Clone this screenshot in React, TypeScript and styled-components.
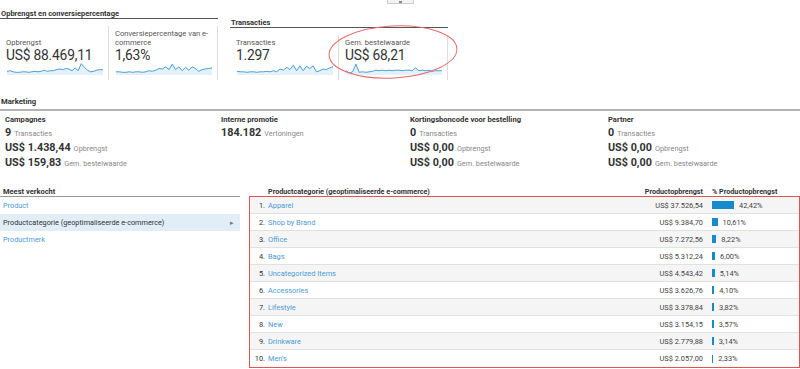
import React from 'react';
import styled, { createGlobalStyle } from 'styled-components';

const GlobalStyle = createGlobalStyle`
    html, body {
        margin: 0;
        padding: 0;
        background: #fff;
    }
    body {
        font-family: Roboto, "Liberation Sans", sans-serif;
        color: #333;
    }
`;

const Page = styled.div`
    position: relative;
    width: 800px;
    height: 369px;
    overflow: hidden;
`;

const TopToggle = styled.div`
    width: 27px;
    height: 4px;
    margin: 0 auto;
    box-sizing: border-box;
    border: 1px solid #ccc;
    border-top: none;
    background: #f3f3f3;
    display: flex;
    justify-content: center;
    align-items: flex-end;
    &::after {
        content: '';
        width: 3px;
        height: 2px;
        background: #888;
    }
`;

const TopSection = styled.div`
    display: flex;
    align-items: flex-end;
    gap: 12px;
    margin-top: 5px;
`;

const Group = styled.div`
    width: 218px;
    display: flex;
    flex-direction: column;
`;

const GroupTitle = styled.div`
    font-size: 7.5px;
    font-weight: 700;
    line-height: 9px;
    padding-left: 1px;
    border-bottom: 1px solid #555;
    margin-bottom: 6.5px;
`;

const Cards = styled.div`
    display: flex;
`;

const Card = styled.div`
    width: 109px;
    box-sizing: border-box;
    border-right: 1px solid #ddd;
    padding: 3px 0 5px 6px;
    display: flex;
    flex-direction: column;
    justify-content: flex-end;
`;

const CardLabel = styled.div`
    font-size: 7.6px;
    line-height: 9px;
    color: #555;
    margin-bottom: 1.5px;
    padding-right: 3px;
`;

const CardValue = styled.div`
    font-size: 13.8px;
    line-height: 14px;
    letter-spacing: -0.2px;
    color: #333;
`;

const SparkSvg = styled.svg`
    display: block;
    margin-left: 1px;
`;

const Section = styled.div`
    margin-top: 17px;
`;

const SectionTitle = styled.div`
    font-size: 7.7px;
    font-weight: 700;
    line-height: 10px;
    padding: 0 0 2px 1px;
    border-bottom: 2px solid #b3b3b3;
`;

const MarketingGrid = styled.div`
    display: grid;
    grid-template-columns: 216px 189px 198px 1fr;
    padding: 3.5px 0 0 5px;
`;

const MarketingTitle = styled.div`
    font-size: 7.6px;
    font-weight: 700;
    line-height: 10px;
`;

const StatLine = styled.div`
    display: flex;
    align-items: baseline;
    height: 15px;
    line-height: 15px;
    white-space: nowrap;
`;

const StatValue = styled.span`
    font-size: 10.8px;
    font-weight: 700;
    color: #333;
`;

const StatLabel = styled.span`
    font-size: 7.3px;
    color: #888;
    margin-left: 3px;
`;

const Bottom = styled.div`
    display: flex;
    gap: 9px;
    margin-top: 16.5px;
`;

const SideList = styled.div`
    width: 240px;
`;

const SideTitle = styled.div`
    box-sizing: border-box;
    height: 11px;
    padding: 2px 0 0 3px;
    font-size: 7.5px;
    font-weight: 700;
    line-height: 8px;
    border-bottom: 1px solid #999;
`;

const SideItem = styled.div<{ $active?: boolean }>`
    height: 17px;
    display: flex;
    align-items: center;
    justify-content: space-between;
    padding: 0 6px 0 3px;
    font-size: 7.3px;
    color: ${(p) => (p.$active ? '#333' : '#4b9bd5')};
    background: ${(p) => (p.$active ? '#e2eef7' : 'transparent')};
`;

const Arrow = styled.span`
    font-size: 7px;
    color: #777;
`;

const TableWrap = styled.div`
    flex: 1;
`;

const HeadRow = styled.div`
    display: grid;
    grid-template-columns: 15px 1fr 100px 96px;
    box-sizing: border-box;
    height: 10px;
    padding: 2px 1px 0;
    font-size: 7.2px;
    font-weight: 700;
    line-height: 8px;
`;

const Box = styled.div`
    border: 1px solid #e25454;
`;

const Row = styled.div<{ $odd: boolean }>`
    display: grid;
    grid-template-columns: 15px 1fr 100px 96px;
    align-items: center;
    height: 17px;
    box-sizing: border-box;
    border-bottom: 1px solid #e1e1e1;
    background: ${(p) => (p.$odd ? '#f5f5f5' : '#fff')};
    font-size: 7.4px;
    &:last-child {
        border-bottom: none;
    }
`;

const Num = styled.div`
    text-align: right;
    color: #333;
`;

const Name = styled.div`
    padding-left: 3px;
    color: #4b9bd5;
`;

const NameHead = styled.div`
    padding-left: 3px;
`;

const Value = styled.div`
    text-align: right;
    color: #444;
`;

const ValueHead = styled.div`
    text-align: right;
`;

const PctCell = styled.div`
    padding-left: 9px;
    display: flex;
    align-items: center;
    color: #444;
`;

const PctHead = styled.div`
    padding-left: 9px;
`;

const Bar = styled.div`
    height: 8px;
    background: #158bcb;
    margin-right: 5px;
`;

const Ellipse = styled.svg`
    position: absolute;
    left: 327px;
    top: 22px;
    overflow: visible;
`;

const Spark = ({ data }: { data: number[] }) => {
    const w = 96;
    const h = 13;
    const step = w / (data.length - 1);
    const pts = data.map((v, i) => `${(i * step).toFixed(1)},${(h - 1 - v * (h - 2)).toFixed(1)}`);
    const line = pts.join(' ');
    const area = `0,${h} ${line} ${w},${h}`;
    return (
        <SparkSvg width={w} height={h} viewBox={`0 0 ${w} ${h}`}>
            <polygon points={area} fill="#e4f1fa" />
            <polyline points={line} fill="none" stroke="#4a9fd8" strokeWidth="1" />
        </SparkSvg>
    );
};

const revenue = [0.25, 0.3, 0.2, 0.15, 0.15, 0.2, 0.2, 0.15, 0.2, 0.25, 0.2, 0.25, 0.35, 0.25, 0.3, 0.3, 0.4, 0.45, 0.4, 0.5, 0.45, 0.3, 0.55, 0.3, 0.95, 0.6, 0.35, 0.2, 0.25, 0.35, 0.4, 0.38];
const conversion = [0.2, 0.2, 0.15, 0.15, 0.2, 0.15, 0.2, 0.2, 0.15, 0.2, 0.3, 0.25, 0.35, 0.5, 0.45, 0.65, 0.4, 0.9, 0.4, 0.65, 0.3, 0.6, 0.35, 0.65, 0.5, 0.25, 0.4, 0.45, 0.5, 0.55];
const transactions = [0.25, 0.2, 0.2, 0.15, 0.2, 0.2, 0.15, 0.2, 0.2, 0.25, 0.2, 0.3, 0.2, 0.45, 0.35, 0.6, 0.4, 0.8, 0.3, 0.75, 0.3, 0.7, 0.5, 0.75, 0.2, 0.3, 0.45, 0.4, 0.55, 0.65];
const orderValue = [0.3, 0.1, 0.2, 0.9, 0.15, 0.2, 0.15, 0.2, 0.25, 0.35, 0.3, 0.35, 0.3, 0.35, 0.3, 0.35, 0.35, 0.3, 0.35, 0.35, 0.3, 0.55, 0.3, 0.35, 0.3, 0.35, 0.25, 0.3, 0.3, 0.3];

const marketing = [
    { title: 'Campagnes', stats: [['9', 'Transacties'], ['US$ 1.438,44', 'Opbrengst'], ['US$ 159,83', 'Gem. bestelwaarde']] },
    { title: 'Interne promotie', stats: [['184.182', 'Vertoningen']] },
    { title: 'Kortingsboncode voor bestelling', stats: [['0', 'Transacties'], ['US$ 0,00', 'Opbrengst'], ['US$ 0,00', 'Gem. bestelwaarde']] },
    { title: 'Partner', stats: [['0', 'Transacties'], ['US$ 0,00', 'Opbrengst'], ['US$ 0,00', 'Gem. bestelwaarde']] },
];

const rows: [string, string, number][] = [
    ['Apparel', 'US$ 37.526,54', 42.42],
    ['Shop by Brand', 'US$ 9.384,70', 10.61],
    ['Office', 'US$ 7.272,56', 8.22],
    ['Bags', 'US$ 5.312,24', 6.0],
    ['Uncategorized Items', 'US$ 4.543,42', 5.14],
    ['Accessories', 'US$ 3.626,76', 4.1],
    ['Lifestyle', 'US$ 3.378,84', 3.82],
    ['New', 'US$ 3.154,15', 3.57],
    ['Drinkware', 'US$ 2.779,88', 3.14],
    ["Men's", 'US$ 2.057,00', 2.33],
];

const fmtPct = (n: number) => n.toFixed(2).replace('.', ',') + '%';

const App = () => {
    return (
        <Page>
            <GlobalStyle />
            <TopToggle />
            <TopSection>
                <Group>
                    <GroupTitle>Opbrengst en conversiepercentage</GroupTitle>
                    <Cards>
                        <Card>
                            <CardLabel>Opbrengst</CardLabel>
                            <CardValue>US$ 88.469,11</CardValue>
                            <Spark data={revenue} />
                        </Card>
                        <Card>
                            <CardLabel>Conversiepercentage van e-commerce</CardLabel>
                            <CardValue>1,63%</CardValue>
                            <Spark data={conversion} />
                        </Card>
                    </Cards>
                </Group>
                <Group>
                    <GroupTitle>Transacties</GroupTitle>
                    <Cards>
                        <Card>
                            <CardLabel>Transacties</CardLabel>
                            <CardValue>1.297</CardValue>
                            <Spark data={transactions} />
                        </Card>
                        <Card>
                            <CardLabel>Gem. bestelwaarde</CardLabel>
                            <CardValue>US$ 68,21</CardValue>
                            <Spark data={orderValue} />
                        </Card>
                    </Cards>
                </Group>
            </TopSection>

            <Section>
                <SectionTitle>Marketing</SectionTitle>
                <MarketingGrid>
                    {marketing.map((m) => (
                        <div key={m.title}>
                            <MarketingTitle>{m.title}</MarketingTitle>
                            {m.stats.map(([v, l]) => (
                                <StatLine key={l}>
                                    <StatValue>{v}</StatValue>
                                    <StatLabel>{l}</StatLabel>
                                </StatLine>
                            ))}
                        </div>
                    ))}
                </MarketingGrid>
            </Section>

            <Bottom>
                <SideList>
                    <SideTitle>Meest verkocht</SideTitle>
                    <SideItem>Product</SideItem>
                    <SideItem $active>
                        Productcategorie (geoptimaliseerde e-commerce)
                        <Arrow>▸</Arrow>
                    </SideItem>
                    <SideItem>Productmerk</SideItem>
                </SideList>
                <TableWrap>
                    <HeadRow>
                        <div />
                        <NameHead>Productcategorie (geoptimaliseerde e-commerce)</NameHead>
                        <ValueHead>Productopbrengst</ValueHead>
                        <PctHead>% Productopbrengst</PctHead>
                    </HeadRow>
                    <Box>
                        {rows.map(([name, value, pct], i) => (
                            <Row key={name} $odd={i % 2 === 0}>
                                <Num>{i + 1}.</Num>
                                <Name>{name}</Name>
                                <Value>{value}</Value>
                                <PctCell>
                                    <Bar style={{ width: `${pct * 0.52}px` }} />
                                    {fmtPct(pct)}
                                </PctCell>
                            </Row>
                        ))}
                    </Box>
                </TableWrap>
            </Bottom>

            <Ellipse width="132" height="58" viewBox="0 0 132 58">
                <ellipse cx="66" cy="30" rx="64" ry="26" fill="none" stroke="#e86a6a" strokeWidth="1" transform="rotate(-3 66 30)" />
            </Ellipse>
        </Page>
    );
};

export default App;
